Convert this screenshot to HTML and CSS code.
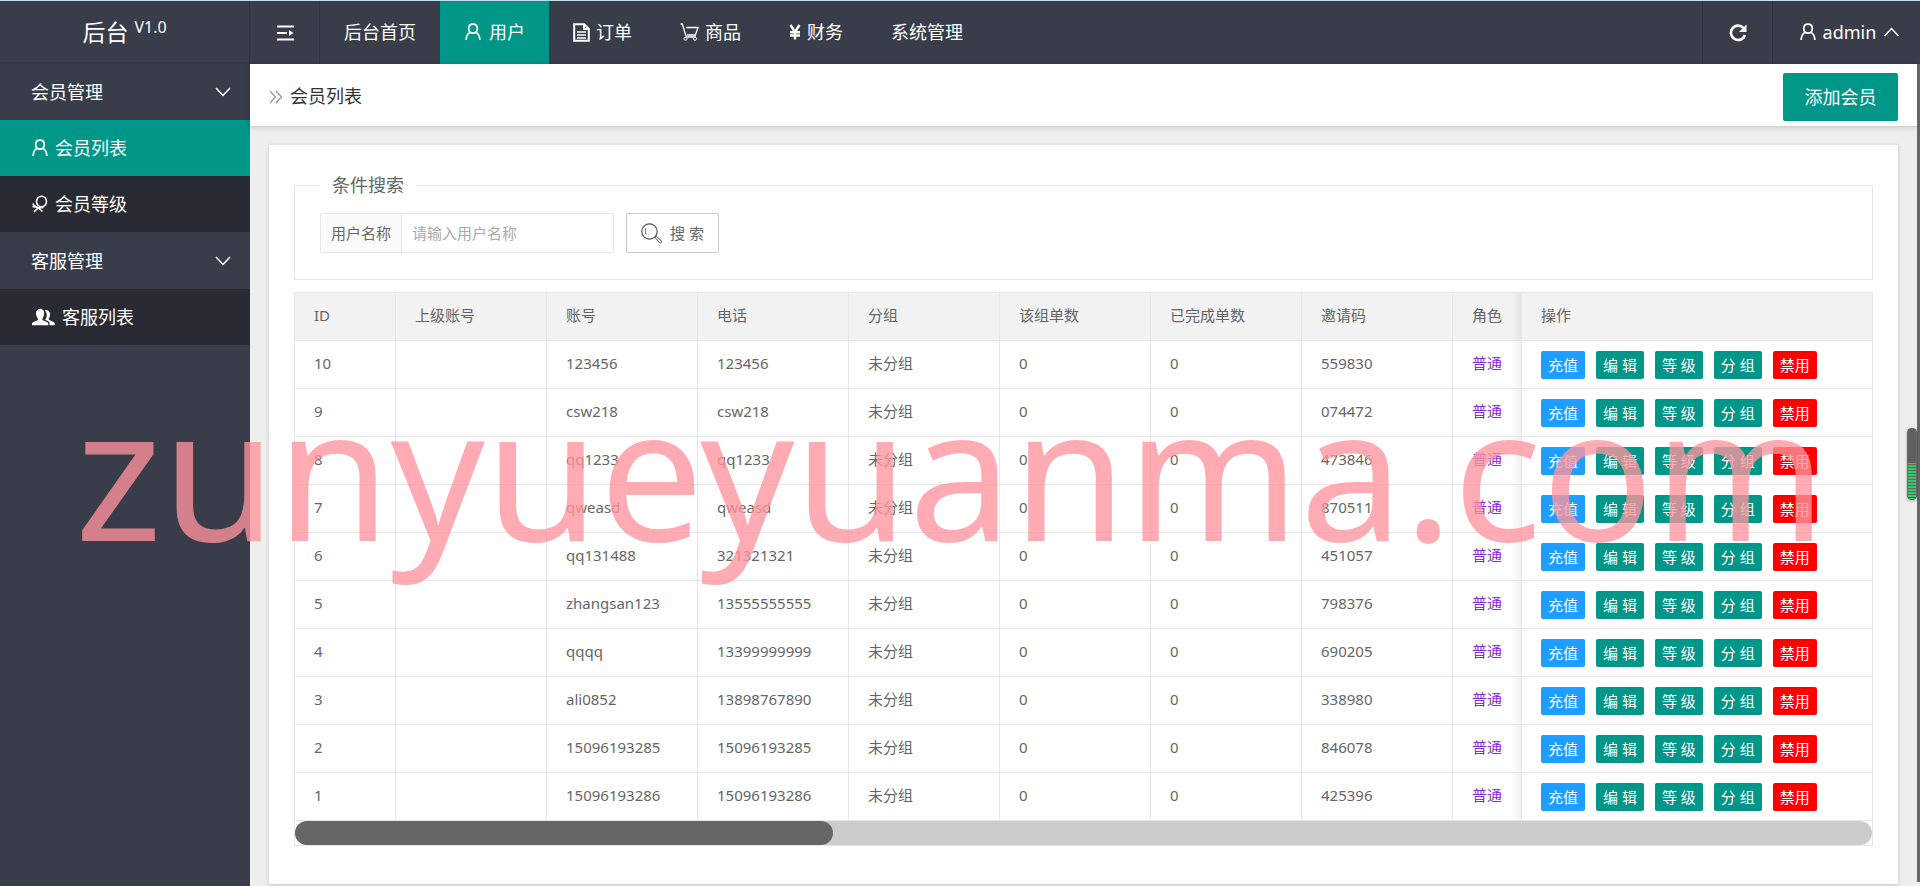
FILE: index.html
```html
<!DOCTYPE html>
<html lang="zh-CN">
<head>
<meta charset="utf-8">
<title>会员列表</title>
<link rel="stylesheet" href="styles.css">
</head>
<body>
<svg class="defs" aria-hidden="true">
  <symbol id="person" viewBox="0 0 16 18"><path d="M8 1.200c2.600 0 4.300 1.900 4.300 4.400S10.600 10.200 8 10.200 3.700 8.100 3.700 5.600 5.400 1.200 8 1.200ZM5.300 9.300C2.600 10.600 1.300 13.300 1.100 17M10.700 9.300c2.700 1.300 4 4 4.200 7.700" fill="none" stroke="currentColor" stroke-width="1.700"/></symbol>
  <symbol id="down" viewBox="0 0 16 10"><path d="M1 1l7 7.500L15 1" fill="none" stroke="currentColor" stroke-width="1.500"/></symbol>
</svg>
<header class="header">
  <div class="logo">后台<sup>V1.0</sup></div>
  <button class="fold" aria-label="收起菜单"><svg width="17" height="16" viewBox="0 0 17 16"><path d="M0 1.500h17M0 8h10M0 14.500h17" stroke="currentColor" stroke-width="2"/><path d="M12 5l4.500 3-4.500 3z" fill="currentColor"/></svg></button>
  <nav class="nav">
    <a href="#">后台首页</a>
    <a href="#" class="active"><svg width="18" height="18"><use href="#person"/></svg>用户</a>
    <a href="#"><svg width="17" height="19" viewBox="0 0 17 19"><path d="M1.200 1.200h10L15.800 6v11.800H1.200zM11 1.500V6h4.500" fill="none" stroke="currentColor" stroke-width="2"/><path d="M4 9h9M4 12h9M4 15h9" stroke="currentColor" stroke-width="1.600"/></svg>订单</a>
    <a href="#"><svg width="19" height="18" viewBox="0 0 19 18"><path d="M.5 1h1.800l4 13H16M6 4.500h12l-2.600 7.500H7" fill="none" stroke="currentColor" stroke-width="1.300"/><circle cx="5.500" cy="15.800" r="1.500" fill="none" stroke="currentColor"/><circle cx="15" cy="15.800" r="1.500" fill="none" stroke="currentColor"/></svg>商品</a>
    <a href="#"><svg width="12" height="16" viewBox="0 0 12 16"><path d="M1.500 1L6 8l4.500-7M6 8v7.500M1 8.200h10M1 11.500h10" fill="none" stroke="currentColor" stroke-width="2.400"/></svg>财务</a>
    <a href="#">系统管理</a>
  </nav>
  <button class="refresh" aria-label="刷新"><svg width="18" height="18" viewBox="0 0 18 18"><path d="M14.500 4A7.200 7.200 0 1 0 16 11" fill="none" stroke="currentColor" stroke-width="2.600"/><path d="M17.500.5v7.500H10z" fill="currentColor"/></svg></button>
  <button class="account"><svg width="16" height="18"><use href="#person"/></svg>admin<svg class="up" width="17" height="10"><use href="#down"/></svg></button>
</header>
<div class="body">
  <aside class="side">
    <button class="group">会员管理<svg width="16" height="10"><use href="#down"/></svg></button>
    <a href="#" class="item active"><svg width="16" height="18"><use href="#person"/></svg>会员列表</a>
    <a href="#" class="item"><svg width="16" height="18" viewBox="0 0 16 18"><ellipse cx="9.500" cy="6.500" rx="5" ry="5.300" fill="none" stroke="currentColor" stroke-width="1.600"/><path d="M.8 8.500C2 11.500 6 13 11.500 12.500M6.500 12.500L2 16.800M6 12.500l4.500 4M.5 11.500l4 .8" fill="none" stroke="currentColor" stroke-width="1.600"/></svg>会员等级</a>
    <button class="group tall">客服管理<svg width="16" height="10"><use href="#down"/></svg></button>
    <a href="#" class="item"><svg width="23" height="18" viewBox="0 0 24 18"><path d="M0 17.500v-2l1-1 4.800-2.200c.6-.4.500-1.200 0-2C3 6 4 .5 8.500.5s5.500 5.500 2.700 9.800c-.5.800-.6 1.600 0 2L16 14.500l1 1v2z" fill="currentColor"/><path d="M13.200 2C18 .2 20.500 6 17.800 10c-.5.900-.4 1.700.3 2.100l4.400 2 1.200 1.200v2.200h-5.400v-2.700l-1.300-1.300-3.300-1.600c2.300-3 2.500-7-.5-9.900z" fill="currentColor"/></svg>客服列表</a>
  </aside>
  <main class="main">
    <div class="bar">
      <svg width="14" height="14" viewBox="0 0 14 14"><path d="M1 1l5.500 6L1 13M7 1l5.500 6L7 13" fill="none" stroke="#999" stroke-width="1.300"/></svg>
      <h1>会员列表</h1>
      <button class="add">添加会员</button>
    </div>
    <section class="card">
      <fieldset class="search">
        <legend>条件搜索</legend>
        <div class="fields">
          <div class="group-input"><label for="name">用户名称</label><input id="name" type="text" placeholder="请输入用户名称"></div>
          <button class="find"><svg width="21" height="21" viewBox="0 0 21 21"><circle cx="8.500" cy="8.500" r="7.700" fill="none" stroke="#555" stroke-width="1.200"/><path d="M4.800 5.500c-1 2-.8 4.500.5 6M14 14.500l1.500-1.300 5 5c.5 1.300-.8 2.200-1.800 1.600z" fill="none" stroke="#555"/></svg>搜 索</button>
        </div>
      </fieldset>
      <div class="table">
        <table>
          <colgroup><col class="c-id"><col class="c"><col class="c"><col class="c"><col class="c"><col class="c"><col class="c"><col class="c"><col class="c-role"><col></colgroup>
          <thead><tr><th>ID</th><th>上级账号</th><th>账号</th><th>电话</th><th>分组</th><th>该组单数</th><th>已完成单数</th><th>邀请码</th><th>角色</th><th>操作</th></tr></thead>
          <tbody id="rows"></tbody>
        </table>
        <div class="scroll"><div class="thumb"></div></div>
      </div>
    </section>
    <div class="page-scroll"></div>
  </main>
</div>
<div class="meter"></div>
<div class="watermark">zunyueyuanma.com</div>
<script src="app.js"></script>
</body>
</html>
```
FILE: styles.css
```css
* { box-sizing: border-box; }
body {
  margin: 0;
  min-height: 100vh;
  display: flex;
  flex-direction: column;
  overflow: hidden;
  font: 15px/24px "Noto Sans", "Noto Sans CJK SC", sans-serif;
  color: #666;
  background: #eee;
}
a { text-decoration: none; color: inherit; }
button, input { font: inherit; color: inherit; border: 0; background: none; margin: 0; padding: 0; }
svg { flex: none; }
.defs { position: absolute; width: 0; height: 0; }

.header {
  display: flex;
  height: 64px;
  border-top: 1px solid #bfe0f2;
  background: #393d49;
  color: #fff;
  font-size: 18px;
}
.logo {
  width: 250px;
  display: flex;
  justify-content: center;
  align-items: center;
  font-size: 23px;
  border-right: 1px solid #2f323d;
  border-bottom: 2px solid #32353f;
}
.logo sup { font-size: 16px; line-height: 16px; margin: 0 0 10px 6px; }
.fold { width: 70px; padding-left: 2px; border-right: 1px solid #30333d; display: flex; align-items: center; justify-content: center; }
.nav { display: flex; flex: 1; }
.nav a { display: flex; align-items: center; gap: 6px; padding: 0 24px 1px; }
.nav .active { gap: 7px; }
.nav .active, .item.active { background: #009688; }
.refresh { width: 70px; border-left: 1px solid #30333d; display: flex; align-items: center; justify-content: center; }
.account { width: 148px; border-left: 1px solid #30333d; display: flex; align-items: center; justify-content: center; gap: 7px; padding: 0 0 1px 7px; }
.up { transform: rotate(180deg); }

.body { display: flex; flex: 1; }
.side { width: 250px; background: #393d49; color: #fff; font-size: 18px; display: flex; flex-direction: column; }
.group { height: 56px; padding: 0 19px 0 31px; display: flex; align-items: center; justify-content: space-between; }
.tall { height: 57px; }
.item { height: 56px; padding: 0 32px; display: flex; align-items: center; gap: 7px; background: #282b33; }

.main { flex: 1; position: relative; min-width: 0; padding-right: 3px; }
.bar {
  height: 62px;
  display: flex;
  align-items: center;
  padding: 4px 19px 0;
  gap: 7px;
  background: #fff;
  box-shadow: 0 1px 5px rgba(0, 0, 0, .2);
}
h1 { flex: 1; margin: 0; padding-bottom: 3px; font-size: 18px; font-weight: 400; color: #333; }
.add { width: 115px; height: 48px; border-radius: 2px; background: #009688; color: #fff; font-size: 18px; }
.page-scroll { position: absolute; right: 0; top: 0; width: 3px; height: 818px; background: #666; }

.card { margin: 19px; padding: 28px 25px 38px; background: #fff; box-shadow: 0 1px 4px rgba(0, 0, 0, .18); }
.search { margin: 0 0 12px; padding: 16px 25px 26px; border: 1px solid #e6e6e6; min-width: 0; }
.search legend { padding: 0 12px; font-size: 18px; }
.fields { display: flex; gap: 12px; }
.group-input { display: flex; height: 40px; width: 294px; border: 1px solid #e6e6e6; border-radius: 2px; }
.group-input label { padding: 7px 10px; border-right: 1px solid #e6e6e6; background: #fbfbfb; }
.group-input input { flex: 1; min-width: 0; padding: 0 10px; }
.group-input input::placeholder { color: #aaa; }
.find { width: 93px; height: 40px; display: flex; align-items: center; justify-content: center; gap: 8px; border: 1px solid #c9c9c9; border-radius: 2px; }

.table { border: 1px solid #e6e6e6; }
table { width: 100%; table-layout: fixed; border-collapse: separate; border-spacing: 0; }
.c-id { width: 101px; }
.c { width: 151px; }
.c-role { width: 69px; }
th, td { height: 48px; padding: 0 0 3px 19px; text-align: left; font-weight: 400; border-right: 1px solid #e6e6e6; border-bottom: 1px solid #e6e6e6; white-space: nowrap; }
th { background: #f2f2f2; }
th:nth-child(9), td:nth-child(9) { background-image: linear-gradient(to left, rgba(0, 0, 0, .06), transparent 10px); }
th:last-child, td:last-child { border-right: 0; }
.role { color: #8a2be2; }
.ops-row { display: flex; gap: 11px; padding-top: 4px; }
.ops-row button { height: 28px; line-height: 28px; padding: 0 7px; border-radius: 2px; background: #009688; color: #fff; }
.ops-row .blue { background: #1e9fff; }
.ops-row .red { background: #f00; }
.scroll { height: 24px; border-radius: 12px; background: #ccc; }
.thumb { width: 34.1%; height: 24px; border-radius: 12px; background: #666; }

.meter {
  position: absolute;
  right: 3px;
  top: 428px;
  width: 10px;
  height: 72px;
  border: 1px solid #666;
  border-radius: 4px;
  background: linear-gradient(#606060 34px, transparent 34px), repeating-linear-gradient(#33cc66 0 2px, #606060 2px 3px);
  box-shadow: 0 1px 3px rgba(0, 0, 0, .3);
}
.watermark {
  position: absolute;
  left: 75px;
  top: 354px;
  font-size: 185px;
  line-height: 230px;
  white-space: nowrap;
  color: rgba(255, 148, 158, .78);
  pointer-events: none;
}
```
FILE: app.js
```js
const members = [
  [10, "123456", "123456", "559830"],
  [9, "csw218", "csw218", "074472"],
  [8, "qq1233", "qq1233", "473846"],
  [7, "qweasd", "qweasd", "870511"],
  [6, "qq131488", "321321321", "451057"],
  [5, "zhangsan123", "13555555555", "798376"],
  [4, "qqqq", "13399999999", "690205"],
  [3, "ali0852", "13898767890", "338980"],
  [2, "15096193285", "15096193285", "846078"],
  [1, "15096193286", "15096193286", "425396"]
];
document.getElementById("rows").innerHTML = members.map(([id, account, phone, code]) => `
  <tr><td>${id}</td><td></td><td>${account}</td><td>${phone}</td><td>未分组</td><td>0</td><td>0</td><td>${code}</td>
  <td class="role">普通</td>
  <td><div class="ops-row"><button class="blue">充值</button><button>编 辑</button><button>等 级</button><button>分 组</button><button class="red">禁用</button></div></td></tr>`).join("");
```
